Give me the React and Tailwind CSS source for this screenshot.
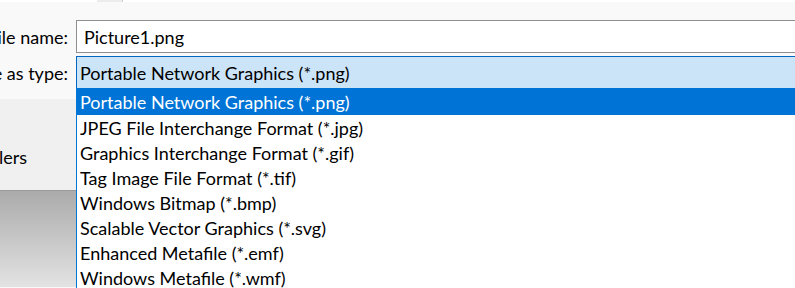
import React from 'react';

const types = [
  'Portable Network Graphics (*.png)',
  'JPEG File Interchange Format (*.jpg)',
  'Graphics Interchange Format (*.gif)',
  'Tag Image File Format (*.tif)',
  'Windows Bitmap (*.bmp)',
  'Scalable Vector Graphics (*.svg)',
  'Enhanced Metafile (*.emf)',
  'Windows Metafile (*.wmf)',
];

const font = { fontFamily: 'Lato, "Noto Sans", sans-serif' };

export default function App() {
  return (
    <div
      className="relative w-[795px] h-[288px] overflow-hidden bg-[#f9f9f9] text-[18px] leading-[22px] text-black"
      style={font}
    >
      {/* Top strip */}
      <div className="flex h-[2px] bg-white">
        <div className="w-[97px]" />
        <div className="w-[25px] bg-[#ececec]" />
        <div className="w-px bg-[#d0d0d0]" />
      </div>

      {/* Form rows */}
      <div className="flex flex-col gap-[3px] pt-[18px]">
        <div className="flex items-center h-[33px]">
          <div className="w-[76px] pr-[8px] flex justify-end whitespace-nowrap overflow-hidden">
            <span>ile name:</span>
          </div>
          <div className="flex-1 h-full flex items-center bg-white border border-[#8f8f8f] border-r-0 pl-[7px]">
            Picture1.png
          </div>
        </div>
        <div className="flex items-center h-[33px]">
          <div className="w-[76px] pr-[8px] flex justify-end whitespace-nowrap overflow-hidden">
            <span>e as type:</span>
          </div>
          <div className="flex-1 h-full flex items-center bg-[#cce4f7] border-t border-l border-[#0067c0] pl-[3px]">
            Portable Network Graphics (*.png)
          </div>
        </div>
      </div>

      {/* Lower left panel */}
      <div className="mt-[10px] h-[91px] bg-[#f0f0f0] pt-[47px]">
        <span className="-ml-[1px]">lers</span>
      </div>
      <div className="h-px bg-[#9a9a9a]" />
      <div className="h-[96px] bg-gradient-to-b from-[#ababab] to-[#e3e3e3]" />

      {/* Dropdown list */}
      <div className="absolute left-[76px] top-[88px] right-0 bottom-0 bg-white border-l border-[#0078d7]">
        {types.map((t, i) => (
          <div
            key={t}
            className={`flex items-center pl-[3px] whitespace-nowrap ${
              i === 0 ? 'bg-[#0074d6] text-white h-[27px]' : 'h-[25px]'
            }`}
          >
            {t}
          </div>
        ))}
      </div>
    </div>
  );
}
